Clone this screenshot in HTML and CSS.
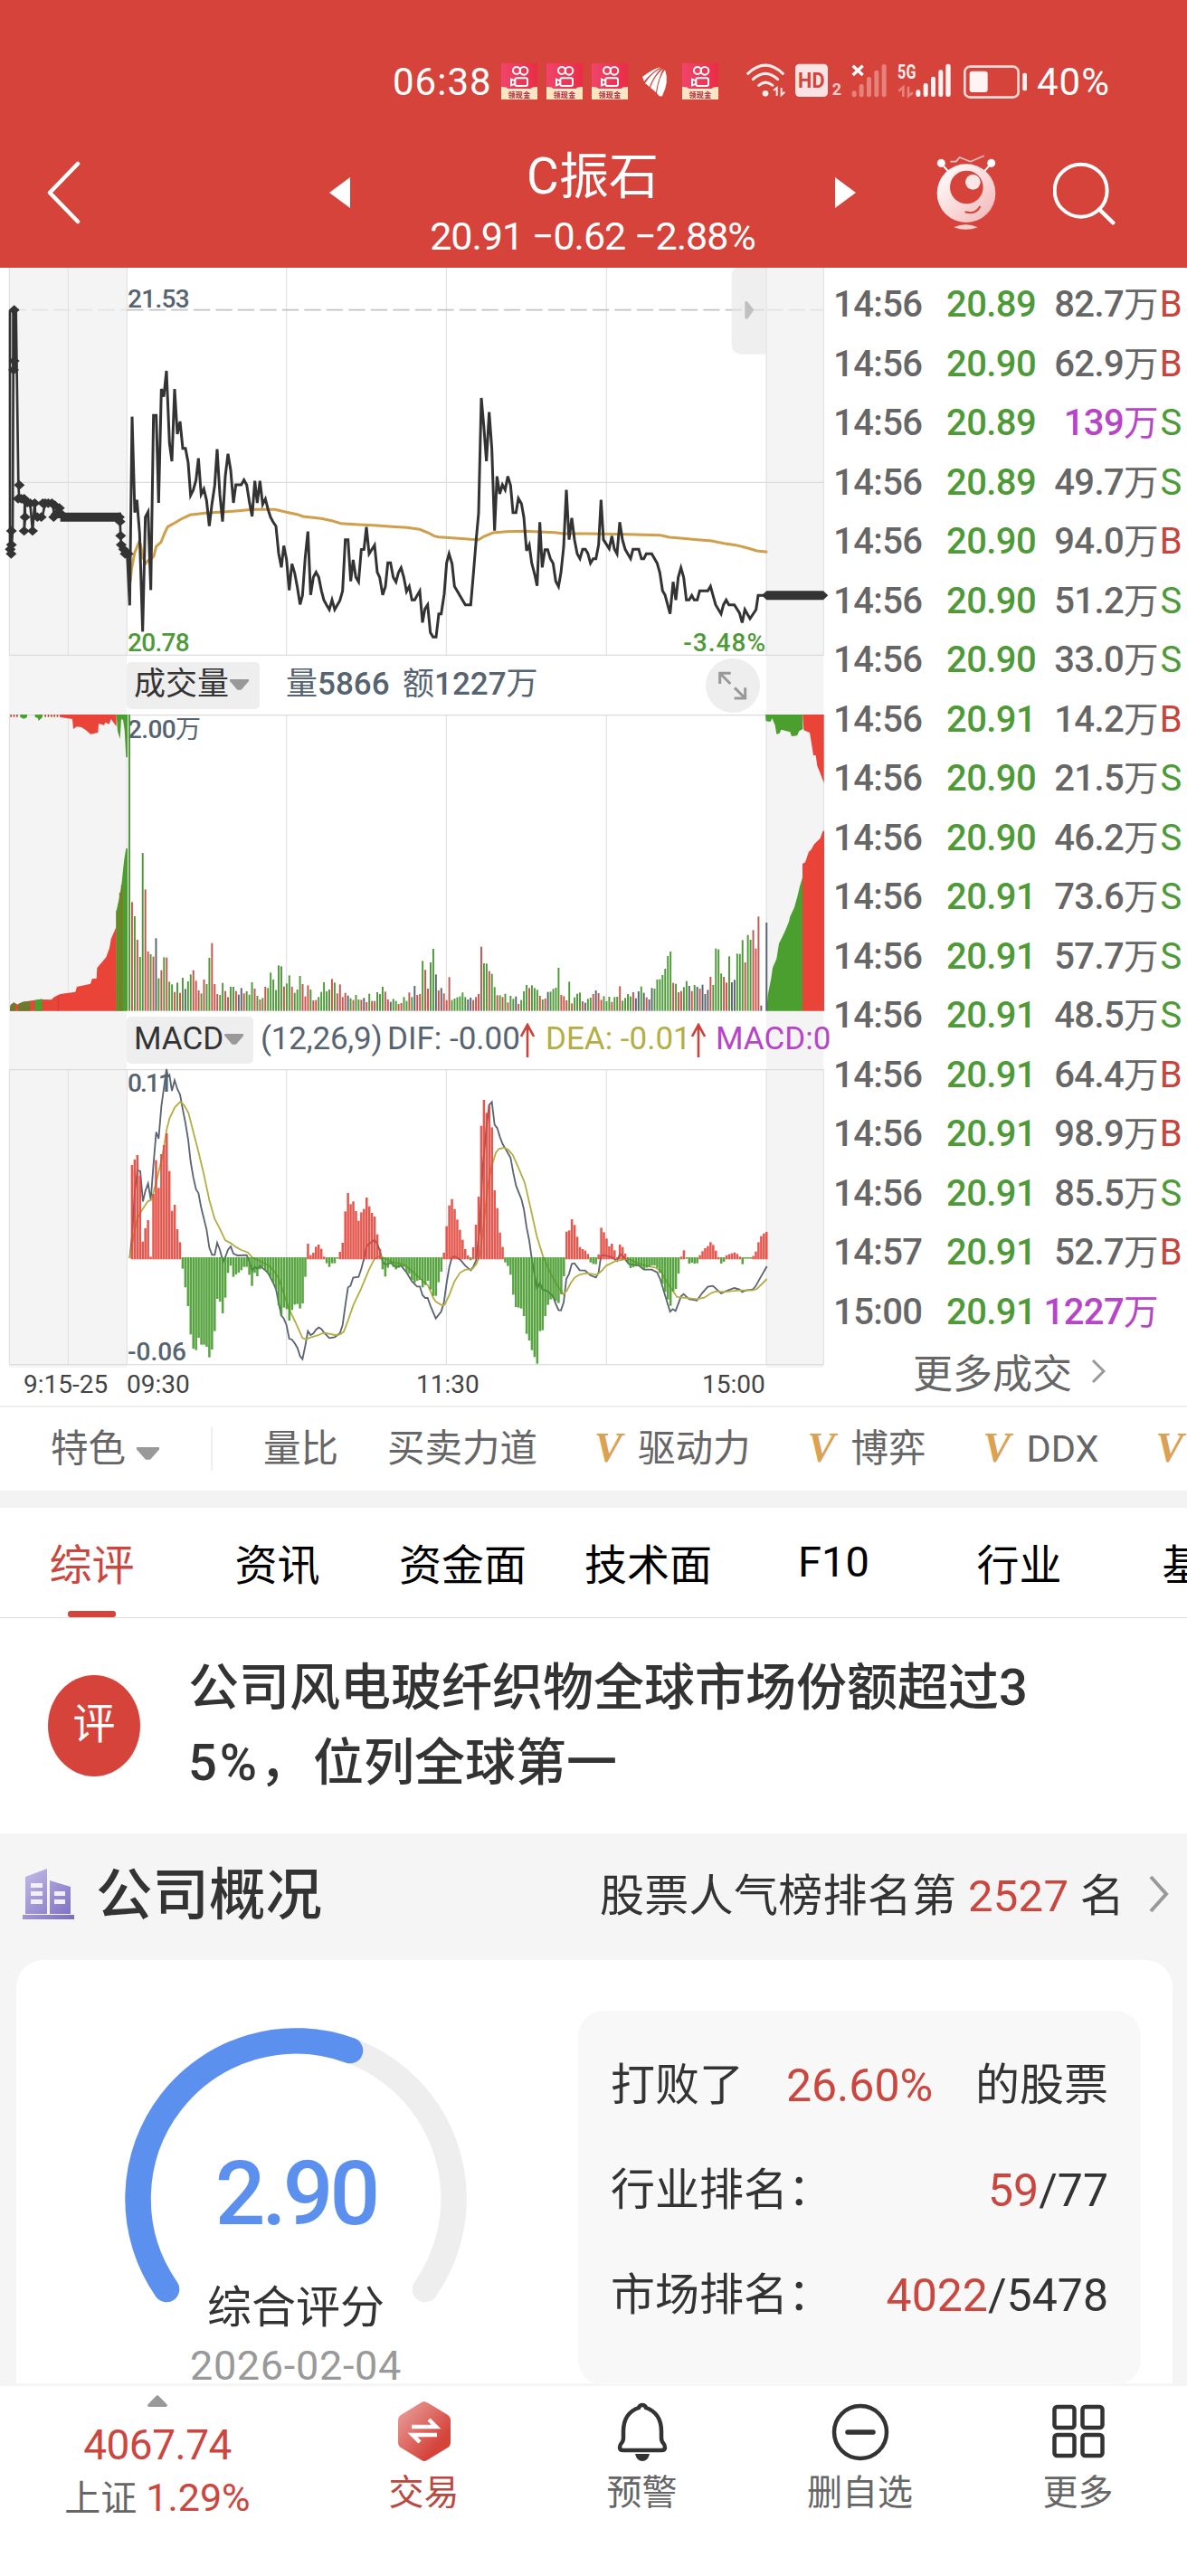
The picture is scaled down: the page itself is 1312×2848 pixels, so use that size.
FILE: index.html
```
<!DOCTYPE html>
<html lang="zh-CN">
<head>
  <meta charset="UTF-8">
  <title>C振石 行情</title>
  <meta name="viewport" content="width=device-width, initial-scale=1.0">
  <link rel="stylesheet" href="styles.css">
</head>
<body>
  <svg width="0" height="0" class="defs">
    <defs>
      <linearGradient id="ks-bg" x1="0" y1="0" x2="1" y2="0"><stop offset="0" stop-color="#f0456b"/><stop offset="1" stop-color="#e92c46"/></linearGradient>
      <linearGradient id="robot-bg" x1="0" y1="0" x2="1" y2="1"><stop offset="0.2" stop-color="#fff3f3"/><stop offset="1" stop-color="#f2b4b4"/></linearGradient>
      <linearGradient id="trade-bg" x1="0" y1="0" x2="1" y2="1"><stop offset="0" stop-color="#eba5a2"/><stop offset="0.75" stop-color="#d5433a"/></linearGradient>
      <linearGradient id="build-bg" x1="0" y1="0" x2="1" y2="1"><stop offset="0" stop-color="#c3bde6"/><stop offset="1" stop-color="#7a6cc3"/></linearGradient>
    </defs>
    <symbol id="ks" viewBox="0 0 120 120">
      <rect width="120" height="120" fill="url(#ks-bg)"/>
      <path d="M0 78 Q20 78 22 84 H98 Q100 78 120 78 V120 H0Z" fill="#fbe6c4"/>
      <g fill="none" stroke="#fff" stroke-width="6"><circle cx="51" cy="24" r="12"/><circle cx="75" cy="25" r="13"/><rect x="46" y="49" width="41" height="26" rx="6"/><path d="M46 58 L33 53 V73 L46 68"/></g>
      <text x="60" y="114" text-anchor="middle" font-size="24" font-weight="700" fill="#b3243c">领现金</text>
    </symbol>
  </svg>

  <header class="top">
    <div class="status-bar">
      <span class="clock">06:38</span>
      <div class="notice-icons">
        <svg width="40" height="40"><use href="#ks"/></svg>
        <svg width="40" height="40"><use href="#ks"/></svg>
        <svg width="40" height="40"><use href="#ks"/></svg>
        <svg width="40" height="40" viewBox="0 0 40 40" fill="#fff"><path d="M6 15 Q16 7 26 4 Q14 12 8 20 Z"/><path d="M9 22 Q15 12 27 5 Q17 16 14 26 Z"/><path d="M15 27 Q19 14 29 6 Q23 18 21 32 Z"/><path d="M22 33 Q24 16 31 7 Q36 20 28 36 Q25 38 22 33 Z"/></svg>
        <svg width="40" height="40"><use href="#ks"/></svg>
      </div>
      <svg class="signal-icons" width="312" height="40" viewBox="255 29 936 120">
        <g fill="none" stroke="#fdecec" stroke-width="9" stroke-linecap="round"><path d="M260 63 Q318 8 376 63"/><path d="M277 82 Q318 44 359 82"/><path d="M296 102 Q318 83 342 102"/></g>
        <circle cx="318" cy="129" r="10" fill="#fdecec"/>
        <path d="M345 119 L356 110 V137 M371 110 V134 L382 124" fill="none" stroke="#fdecec" stroke-width="6"/>
        <rect x="417" y="31" width="108" height="109" rx="14" fill="#fae3e3"/>
        <text x="471" y="110" text-anchor="middle" font-size="72" font-weight="700" fill="#d5433a" textLength="90" lengthAdjust="spacingAndGlyphs">HD</text>
        <text x="539" y="134" font-size="54" font-weight="700" fill="#f6cdcb">2</text>
        <path d="M608 37 L641 68 M641 37 L608 68" stroke="#fff" stroke-width="10"/>
        <g fill="#e5827c"><rect x="605" y="120" width="15" height="21" rx="7"/><rect x="629" y="98" width="15" height="43" rx="7"/><rect x="654" y="74" width="15" height="67" rx="7"/><rect x="679" y="52" width="15" height="89" rx="7"/><rect x="704" y="32" width="15" height="109" rx="7"/></g>
        <text x="756" y="80" font-size="66" font-weight="700" fill="#fdecec" textLength="62" lengthAdjust="spacingAndGlyphs">5G</text>
        <path d="M760 121 L775 108 V140 M792 106 V138 L807 126" fill="none" stroke="#e5827c" stroke-width="8"/>
        <g fill="#fff3f3"><rect x="817" y="117" width="15" height="23" rx="7"/><rect x="842" y="95" width="15" height="45" rx="7"/><rect x="867" y="73" width="15" height="67" rx="7"/><rect x="892" y="51" width="15" height="89" rx="7"/><rect x="916" y="31" width="16" height="109" rx="7"/></g>
        <rect x="979" y="40" width="178" height="102" rx="18" fill="none" stroke="#fad9d7" stroke-width="8"/>
        <rect x="995" y="55" width="60" height="70" rx="9" fill="#fff3f3"/>
        <rect x="1171" y="61" width="14" height="59" rx="5" fill="#fff3f3"/>
      </svg>
      <span class="battery">40%</span>
    </div>
    <div class="title-bar">
      <svg class="back" width="40" height="70" viewBox="0 0 40 70"><path d="M36 3 L5 35 L36 67" fill="none" stroke="#fff" stroke-width="4.5" stroke-linecap="round" stroke-linejoin="round"/></svg>
      <svg class="prev" width="24" height="34" viewBox="0 0 24 34"><path d="M23 0 V34 L0 17Z" fill="#fff"/></svg>
      <div class="stock">
        <h1>C振石</h1>
        <p>20.91 −0.62 −2.88%</p>
      </div>
      <svg class="next" width="24" height="34" viewBox="0 0 24 34"><path d="M1 0 V34 L24 17Z" fill="#fff"/></svg>
      <svg class="robot" width="66" height="84" viewBox="888 334 198 252">
        <g stroke="#fff" fill="#fff"><path d="M912 372 L926 388 M1062 372 L1048 388" stroke-width="6"/><circle cx="904" cy="362" r="13"/><circle cx="1070" cy="362" r="13"/></g>
        <path d="M934 357 H953 L965 343 L1001 357 L1046 338" fill="none" stroke="#f5c3c0" stroke-width="5"/>
        <circle cx="987" cy="462" r="97" fill="url(#robot-bg)"/>
        <circle cx="988" cy="442" r="55" fill="#d5433a"/>
        <circle cx="1009" cy="425" r="25" fill="#fbe6e6"/>
        <path d="M983 524 Q1020 534 1033 505" fill="none" stroke="#d5433a" stroke-width="6"/>
        <path d="M946 575 Q985 556 1025 575 Q985 590 946 575Z" fill="#f7cfcd"/>
      </svg>
      <svg class="search" width="70" height="70" viewBox="1274 354 210 210"><circle cx="1366" cy="449" r="87" fill="none" stroke="#fff" stroke-width="12"/><path d="M1427 511 L1473 556" stroke="#fff" stroke-width="13" stroke-linecap="round"/></svg>
    </div>
  </header>

  <section class="quote">
    <div class="charts">
      <svg id="price" class="chart" width="918" height="430" viewBox="0 18 2754 1290"></svg>

      <div class="indicator-bar">
        <button class="picker volume-picker">成交量<i class="caret"></i></button>
        <span class="vol-text">量<b>5866</b></span>
        <span class="amount-text">额<b>1227</b>万</span>
        <span class="expand">
          <svg width="60" height="60" viewBox="0 0 180 180" fill="none" stroke="#999" stroke-width="9"><path d="M47 84 V49 H83 M49 51 L82 84 M131 97 V132 H95 M129 130 L96 97"/></svg>
        </span>
      </div>

      <svg id="volume" class="chart" width="918" height="328" viewBox="0 210 2754 984"></svg>

      <div class="indicator-bar">
        <button class="picker macd-picker">MACD<i class="caret"></i></button>
        <span class="macd-params">(12,26,9)</span>
        <span class="dif">DIF: -0.00</span>
        <svg class="up" width="16" height="38" viewBox="0 0 16 38"><path d="M8 38 V2 M1 15 L8 2 L15 15" fill="none" stroke="#c9433a" stroke-width="2.6"/></svg>
        <span class="dea">DEA: -0.01</span>
        <svg class="up" width="16" height="38" viewBox="0 0 16 38"><path d="M8 38 V2 M1 15 L8 2 L15 15" fill="none" stroke="#c9433a" stroke-width="2.6"/></svg>
        <span class="macd">MACD:0</span>
      </div>

      <svg id="macd" class="chart" width="918" height="326" viewBox="0 66 2754 978"></svg>

      <div class="time-axis">
        <span>9:15-25</span><span>09:30</span><span>11:30</span><span>15:00</span>
      </div>
    </div>

    <div class="trades">
      <div id="trade-list"></div>
      <a class="more">更多成交<svg width="16" height="28" viewBox="0 0 16 28"><path d="M2 2 L14 14 L2 26" fill="none" stroke="#999" stroke-width="3"/></svg></a>
    </div>
  </section>

  <nav class="features">
    <span class="special">特色<i class="caret"></i></span>
    <span>量比</span>
    <span>买卖力道</span>
    <span class="vip"><b>V</b>驱动力</span>
    <span class="vip"><b>V</b>博弈</span>
    <span class="vip"><b>V</b>DDX</span>
    <span class="vip"><b>V</b></span>
  </nav>

  <nav class="tabs">
    <span class="active">综评</span><span>资讯</span><span>资金面</span><span>技术面</span><span>F10</span><span>行业</span><span>基金</span>
  </nav>

  <section class="comment">
    <div class="badge">评</div>
    <p>公司风电玻纤织物全球市场份额超过3<br><span class="percent">5%，</span>位列全球第一</p>
  </section>

  <section class="profile">
    <div class="profile-head">
      <svg width="57" height="56" viewBox="0 0 57 56"><path d="M3 50 V9 L27 0 V50Z M30 50 V13 L53 20 V50Z M0 51 H57 V56 H0Z" fill="url(#build-bg)"/><g fill="#f1effa"><rect x="9" y="16" width="13" height="5"/><rect x="9" y="25" width="13" height="5"/><rect x="9" y="34" width="13" height="5"/><rect x="35" y="25" width="12" height="5"/><rect x="35" y="34" width="12" height="5"/></g></svg>
      <h2>公司概况</h2>
      <p class="rank">股票人气榜排名第 <em>2527</em> 名</p>
      <svg class="arrow" width="24" height="42" viewBox="0 0 24 42"><path d="M3 2 L20 21 L3 40" fill="none" stroke="#999" stroke-width="4"/></svg>
    </div>
    <div class="card">
      <div class="score">
        <svg width="378" height="318" viewBox="0 0 378 318" fill="none" stroke-width="28.5" stroke-linecap="round">
          <path d="M46 289 A174.6 174.6 0 1 1 332 289" stroke="#eee"/>
          <path d="M46 289 A174.6 174.6 0 0 1 249 25" stroke="#5b90ee"/>
        </svg>
        <div class="score-num">2.90</div>
        <div class="score-name">综合评分</div>
        <div class="score-date">2026-02-04</div>
      </div>
      <div class="ranks">
        <div><span>打败了</span><em>26.60%</em><span>的股票</span></div>
        <div><span>行业排名：</span><span class="num"><em>59</em>/77</span></div>
        <div><span>市场排名：</span><span class="num"><em>4022</em>/5478</span></div>
      </div>
    </div>
  </section>

  <footer class="bottom-bar">
    <div class="index-quote">
      <svg width="22" height="13" viewBox="0 0 22 13"><path d="M11 0 Q13 1 22 11 Q22 13 20 13 H2 Q0 13 0 11 Q9 1 11 0Z" fill="#999"/></svg>
      <strong>4067.74</strong>
      <p>上证 <em>1.29%</em></p>
    </div>
    <div class="action trade">
      <svg width="58" height="66" viewBox="0 0 58 66"><path d="M29 0 Q31 0 55 15 Q58 17 58 21 V45 Q58 49 55 51 L32 65 Q29 67 26 65 L3 51 Q0 49 0 45 V21 Q0 17 3 15 L26 1 Q28 0 29 0Z" fill="url(#trade-bg)"/><path d="M15 28 H42 L34 20 M43 37 H16 L24 45" fill="none" stroke="#fff" stroke-width="4.5"/></svg>
      <span>交易</span>
    </div>
    <div class="action">
      <svg width="58" height="66" viewBox="0 0 58 66"><path d="M29 4 Q32 4 33 7 Q50 13 50 33 V40 Q50 44 52 46 Q54 48 54 51 Q54 54 50 54 H8 Q4 54 4 51 Q4 48 6 46 Q8 44 8 40 V33 Q8 13 25 7 Q26 4 29 4Z" fill="none" stroke="#333" stroke-width="4.5"/><path d="M21 58 H37 Q35 66 29 66 Q23 66 21 58Z" fill="#333"/></svg>
      <span>预警</span>
    </div>
    <div class="action">
      <svg width="64" height="66" viewBox="0 0 64 66"><circle cx="32" cy="34" r="29" fill="none" stroke="#333" stroke-width="4.5"/><path d="M18 34 H46" stroke="#333" stroke-width="5.5" stroke-linecap="round"/></svg>
      <span>删自选</span>
    </div>
    <div class="action">
      <svg width="58" height="66" viewBox="0 0 58 66" fill="none" stroke="#333" stroke-width="4.5"><rect x="2.5" y="6" width="22" height="23" rx="3"/><rect x="33.5" y="6" width="22" height="23" rx="3"/><rect x="2.5" y="37" width="22" height="23" rx="3"/><rect x="33.5" y="37" width="22" height="23" rx="3"/></svg>
      <span>更多</span>
    </div>
  </footer>

  <script src="script.js"></script>
</body>
</html>
```

FILE: styles.css
```
* {
  margin: 0;
  padding: 0;
  box-sizing: border-box;
}

body {
  width: 1312px;
  height: 2848px;
  overflow: hidden;
  background: #fff;
  color: #333;
  font-family: Roboto, "Noto Sans CJK SC", sans-serif;
}

svg {
  display: block;
  flex: none;
}

svg text {
  font-family: Roboto, "Noto Sans CJK SC", sans-serif;
}

em {
  font-style: normal;
  color: #ca463e;
}

.defs {
  position: absolute;
}

/* 顶部 */
.top {
  height: 296px;
  background: #d5433a;
  color: #fff;
}

.status-bar {
  display: flex;
  align-items: center;
  height: 180px;
  padding-left: 434px;
  font-size: 42px;
  letter-spacing: 1px;
}

.clock {
  width: 120px;
}

.notice-icons {
  display: flex;
  gap: 10px;
}

.signal-icons {
  margin-left: 31px;
}

.battery {
  margin-left: 9px;
}

.title-bar {
  display: flex;
  align-items: center;
  height: 116px;
  padding: 0 78px 0 50px;
}

.back {
  margin-top: -50px;
}

.prev {
  margin: -50px 0 0 274px;
}

.stock {
  width: 536px;
  margin-top: -20px;
  text-align: center;
}

.stock h1 {
  font-size: 55px;
  font-weight: 400;
  line-height: 66px;
}

.stock p {
  font-size: 43px;
  line-height: 66px;
  letter-spacing: -1px;
  white-space: nowrap;
}

.next {
  margin-top: -50px;
}

.robot {
  margin: -50px 0 0 89px;
}

.search {
  margin: -48px 0 0 63px;
}

/* 分时图 */
.quote {
  display: flex;
  height: 1260px;
  border-bottom: 2px solid #eee;
}

.charts {
  width: 919px;
  overflow: hidden;
  background: linear-gradient(to right, transparent 10px, #f4f4f4 10px, #f4f4f4 140px, transparent 140px, transparent 847px, #f4f4f4 847px, #f4f4f4 910px, transparent 910px) no-repeat 0 0 / 100% 1216px;
}

.chart {
  overflow: visible;
}

.indicator-bar {
  display: flex;
  align-items: center;
  height: 64px;
  padding-left: 140px;
  font-size: 35px;
  line-height: 60px;
  color: #566370;
  white-space: nowrap;
}

.indicator-bar span {
  padding-bottom: 3px;
}

.indicator-bar b {
  font-weight: 500;
}

.picker {
  display: flex;
  align-items: center;
  height: 52px;
  padding: 0 0 2px 8px;
  border: none;
  border-radius: 5px;
  background: #eee;
  color: #333;
  font: 35px/50px Roboto, "Noto Sans CJK SC", sans-serif;
}

.volume-picker {
  width: 147px;
}

.macd-picker {
  width: 140px;
}

.caret {
  width: 21px;
  height: 13px;
  margin-left: 1px;
  background: #999;
  clip-path: polygon(0 0, 100% 0, 100% 20%, 60% 95%, 40% 95%, 0 20%);
}

.vol-text {
  width: 129px;
  margin-left: 29px;
}

.amount-text {
  width: 190px;
}

.indicator-bar .expand {
  margin-left: 145px;
  padding: 0;
  border-radius: 50%;
  background: #eee;
}

.macd-params {
  width: 140px;
  margin-left: 8px;
  letter-spacing: -0.2px;
}

.dif {
  width: 147px;
}

.dea {
  width: 161px;
  margin-left: 12px;
  color: #b3af45;
}

.macd {
  width: 126px;
  margin-left: 11px;
  overflow: hidden;
  color: #b844ca;
}

.time-axis {
  display: flex;
  padding-top: 4px;
  font-size: 28px;
  line-height: 38px;
  color: #444;
}

.time-axis span:nth-child(1) {
  width: 140px;
  padding-left: 26px;
}

.time-axis span:nth-child(2) {
  width: 320px;
}

.time-axis span:nth-child(3) {
  width: 316px;
}

/* 成交明细 */
.trades {
  width: 393px;
  padding-top: 7px;
}

.trade-row {
  display: flex;
  height: 65.5px;
  font-size: 40px;
  font-weight: 500;
  line-height: 67px;
  letter-spacing: -0.6px;
  color: #666;
  white-space: nowrap;
}

.trade-row .time {
  width: 127px;
  padding-left: 2px;
}

.trade-row .price {
  width: 97px;
  color: #4e9a38;
}

.trade-row .amount {
  width: 137px;
  text-align: right;
}

.trade-row .amount i {
  font-style: normal;
  font-weight: 400;
  font-size: 38.5px;
}

.trade-row .big {
  color: #b844ca;
}

.trade-row .side {
  width: 28px;
  font-weight: 400;
  text-align: center;
}

.trade-row .buy {
  color: #c9433a;
}

.trade-row .sell {
  color: #4e9a38;
}

.more {
  display: flex;
  align-items: center;
  justify-content: flex-end;
  gap: 21px;
  height: 66px;
  padding: 2px 90px 0 0;
  font-size: 44px;
  color: #666;
}

/* 特色指标 */
.features {
  display: flex;
  align-items: center;
  height: 111px;
  padding-left: 56px;
  border-bottom: 19px solid #f3f3f3;
  font-size: 41.5px;
  line-height: 60px;
  color: #666;
  white-space: nowrap;
  overflow: hidden;
}

.features > span {
  flex: none;
  margin-right: 54px;
}

.features .special {
  display: flex;
  align-items: center;
  height: 48px;
  width: 179px;
  margin-right: 56px;
  border-right: 2px solid #eee;
}

.special .caret {
  width: 25px;
  height: 15px;
  margin: 10px 0 0 12px;
}

.vip b {
  display: inline-block;
  width: 48px;
  font: italic bold 46px/50px "Liberation Serif", serif;
  color: #dba253;
}

.features .vip {
  margin-left: 9px;
}

/* 标签页 */
.tabs {
  display: flex;
  height: 122px;
  overflow: hidden;
  border-bottom: 1px solid #ddd;
}

.tabs span {
  flex: none;
  display: flex;
  flex-direction: column;
  justify-content: center;
  align-items: center;
  width: 205px;
  padding: 0 2px 2px 0;
  font-size: 47px;
  color: #000;
}

.tabs .active {
  position: relative;
  color: #ca463e;
}

.tabs .active::after {
  content: "";
  position: absolute;
  bottom: 0;
  width: 53px;
  height: 7px;
  border-radius: 3px;
  background: #d5433a;
}

/* 点评 */
.comment {
  display: flex;
  align-items: center;
  height: 238px;
  padding-left: 53px;
}

.badge {
  width: 102px;
  height: 112px;
  border-radius: 50%;
  background: #d5433a;
  color: #fff;
  font-size: 47px;
  line-height: 108px;
  text-align: center;
}

.comment p {
  margin-left: 53px;
  font-size: 56px;
  font-weight: 500;
  line-height: 83px;
  white-space: nowrap;
}

.percent {
  letter-spacing: 3px;
}

/* 公司概况 */
.profile {
  height: 611px;
  overflow: hidden;
  background: #f5f5f5;
}

.profile-head {
  display: flex;
  align-items: center;
  height: 140px;
  padding: 0 19px 7px 25px;
}

.profile-head h2 {
  flex: 1;
  margin-left: 24px;
  padding-bottom: 8px;
  font-size: 62.5px;
  font-weight: 500;
}

.rank {
  padding-bottom: 4px;
  font-size: 49px;
  letter-spacing: 0.3px;
  white-space: nowrap;
}

.arrow {
  margin-left: 26px;
}

.card {
  display: flex;
  height: 468px;
  margin: 0 16px 0 18px;
  border-radius: 30px 30px 0 0;
  background: #fff;
}

.score {
  width: 378px;
  height: 393px;
  margin: 75px 0 0 120px;
  text-align: center;
}

.score-num {
  margin-top: -192px;
  font-size: 98px;
  font-weight: 500;
  line-height: 116px;
  letter-spacing: -4px;
  color: #5b90ee;
}

.score-name {
  margin-top: 34px;
  font-size: 49px;
  line-height: 68px;
}

.score-date {
  font-size: 45px;
  line-height: 60px;
  letter-spacing: 0.7px;
  color: #999;
}

.ranks {
  width: 622px;
  height: 414px;
  margin: 56px 0 0 123px;
  padding: 25px 36px 0;
  border-radius: 28px;
  background: #f8f8f8;
  font-size: 49px;
}

.ranks div {
  display: flex;
  justify-content: space-between;
  height: 116px;
  line-height: 116px;
  white-space: nowrap;
}

.ranks em,
.ranks .num {
  font-size: 50px;
}

/* 底部栏 */
.bottom-bar {
  display: flex;
  height: 210px;
  background: #fff;
  text-align: center;
}

.index-quote {
  display: flex;
  flex-direction: column;
  align-items: center;
  width: 348px;
  padding-top: 10px;
}

.index-quote strong {
  margin-top: 14px;
  font-size: 46px;
  font-weight: 400;
  line-height: 56px;
  letter-spacing: -0.5px;
  color: #ca463e;
}

.index-quote p {
  font-size: 40px;
  line-height: 60px;
  color: #666;
}

.index-quote em {
  font-size: 43px;
}

.action {
  display: flex;
  flex-direction: column;
  align-items: center;
  width: 241px;
  padding-top: 17px;
  font-size: 39px;
  line-height: 58px;
  color: #666;
}

.action span {
  margin-top: 6px;
}

.trade span {
  color: #bb4740;
}
```

FILE: script.js
```
// 图表坐标单位为 1/3 像素
const X0 = 429;
const STEP = 8.84;

function grid(top, bottom, rows) {
  let s = '';
  [31, 226, 421, 950, 1480, 2011, 2541, 2731].forEach(x => {
    s += `<path d="M${x} ${top}V${bottom}" stroke="#e1e1e1" stroke-width="3.5"/>`;
  });
  rows.forEach(y => {
    s += `<path d="M31 ${y}H2732" stroke="#dcdcdc" stroke-width="3.5"/>`;
  });
  return s;
}

function line(points, color, width) {
  return `<polyline points="${points}" fill="none" stroke="${color}" stroke-width="${width}"/>`;
}

function area(points, color) {
  return `<polygon points="${points}" fill="${color}"/>`;
}

function label(x, y, text, color, width) {
  return `<text x="${x}" y="${y}" font-size="84" font-weight="500" fill="${color}" textLength="${width}">${text}</text>`;
}

/* ---------- 分时价格 ---------- */
const auction = '33,160 33,950 37,965 42,891 45,158 47,158 47,357 53,158 61,739 64,784 82,790 84,845 80,891 82,800 100,799 108,891 115,799 118,845 140,845 150,799 175,799 180,845 400,845 398,860 400,907 402,937 410,952 415,967 425,967';
const marks = '47,158 47,327 45,357 64,739 60,784 70,784 80,784 90,797 100,799 115,799 83,845 80,891 108,891 124,845 137,845 142,799 150,799 160,799 172,799 182,806 197,815 178,845 186,835 200,832 38,891 38,937 34,952 37,967 396,845 398,860 400,907 402,937 410,952 415,967 425,967';
const price = '422,967 430,1138 438,512 447,830 454,788 463,900 473,1225 482,845 491,828 500,1087 509,508 518,508 526,798 535,420 543,446 552,360 562,600 570,660 579,420 588,570 597,528 606,617 615,617 624,665 632,773 641,755 650,722 658,650 667,770 676,752 685,790 694,875 703,800 712,740 720,620 729,770 738,860 747,710 756,635 765,690 774,798 782,738 800,738 809,722 818,738 827,795 836,843 845,725 853,798 862,725 871,803 880,785 889,820 897,845 906,862 915,875 924,965 933,1012 941,940 950,985 959,1088 968,1000 977,1030 986,1078 995,1135 1003,1105 1012,980 1021,893 1030,1103 1039,1045 1048,1028 1057,1045 1066,1090 1074,1120 1083,1137 1092,1152 1101,1120 1110,1152 1127,1122 1136,1090 1145,920 1154,920 1163,1058 1171,987 1180,1045 1189,1060 1198,953 1207,952 1215,878 1224,967 1242,938 1251,1028 1259,1045 1269,1103 1278,1075 1286,997 1295,997 1304,1045 1313,1060 1321,1030 1330,1013 1339,1045 1348,1092 1357,1075 1366,1120 1375,1120 1392,1090 1401,1195 1409,1150 1418,1136 1427,1228 1436,1243 1446,1243 1455,1166 1463,1166 1473,1100 1481,997 1489,967 1499,1000 1507,1075 1543,1136 1561,1136 1570,1030 1579,920 1587,832 1596,450 1604,540 1613,660 1622,497 1631,620 1640,890 1648,710 1657,768 1666,738 1675,755 1684,710 1693,740 1701,830 1711,830 1719,783 1729,800 1737,845 1746,957 1755,937 1763,997 1773,1035 1781,1073 1790,862 1798,1012 1807,953 1816,953 1825,983 1834,998 1843,1058 1852,1075 1860,1030 1869,945 1878,755 1887,920 1896,848 1905,920 1914,967 1923,983 1932,952 1941,952 1949,965 1958,998 1967,983 1976,983 1985,937 1993,788 2001,920 2020,950 2029,908 2037,950 2046,967 2055,862 2064,920 2073,952 2091,983 2099,952 2118,952 2127,983 2135,983 2143,967 2161,967 2179,998 2188,1030 2197,1090 2205,1103 2222,1166 2232,1060 2241,1120 2249,1045 2258,1013 2267,1045 2276,1120 2285,1120 2294,1105 2302,1120 2312,1120 2320,1090 2347,1090 2356,1075 2373,1136 2391,1166 2399,1136 2408,1120 2417,1136 2435,1136 2452,1163 2461,1195 2470,1152 2487,1182 2507,1152 2514,1105 2540,1105';
const average = '432,1060 436,1020 446,965 460,930 466,935 474,980 484,998 492,988 500,985 510,975 518,942 534,928 545,900 556,877 580,864 600,852 630,838 680,832 740,828 790,824 840,820 912,820 950,829 985,836 1005,843 1065,850 1100,857 1130,866 1190,870 1250,873 1300,877 1350,880 1392,886 1420,897 1440,908 1455,911 1500,914 1560,919 1587,920 1605,909 1635,897 1680,893 1740,892 1840,896 1870,900 1950,900 2080,902 2190,905 2220,912 2360,924 2400,932 2440,938 2480,948 2510,957 2545,961';

let s = grid(18, 1303, [730, 1303]);
s += '<path d="M31 158H421M2541 158H2731" stroke="#e4e4e4" stroke-width="5" stroke-dasharray="55 18.5"/>';
s += '<path d="M421 158H2540" stroke="#c4c4c4" stroke-width="5" stroke-dasharray="55 18.5"/>';
s += '<path d="M2540 18H2450Q2426 18 2426 42V270Q2426 305 2462 305H2540Z" fill="#e6e6e6" fill-opacity=".65"/>';
s += '<path d="M2470 132Q2472 126 2480 132L2500 158L2480 186Q2472 190 2470 184Z" fill="#c0c0c0"/>';
s += label(423, 149, '21.53', '#566370', 206);
s += label(423, 1291, '20.78', '#4e9a38', 206);
s += line(average, '#cf9f4c', 9);
s += line(auction, '#333', 8);
s += line('47,158 47,357', '#333', 14);
s += '<path d="M200 845H402" stroke="#333" stroke-width="30"/>';
marks.split(' ').forEach(p => {
  const [x, y] = p.split(',').map(Number);
  s += `<path d="M${x - 18} ${y}L${x} ${y - 16}L${x + 18} ${y}L${x} ${y + 16}Z" fill="#333"/>`;
});
s += line(price, '#333', 9);
s += '<path d="M2526 1105L2542 1090H2730L2746 1105L2730 1120H2542Z" fill="#333"/>';
s += label(2266, 1291, '-3.48%', '#4e9a38', 272);
document.getElementById('price').innerHTML = s;

/* ---------- 成交量，每分钟一根柱 ---------- */
const volume = `g210 r832 g879 r957 g1014 g669 r790 r996 g1005 r1013 k952 g1085 r1058 g1015 r1016 g1096 g1105 r1130 g1099 r1133
g1083 k1120 g1095 g1072 r1058 r1093 r1125 g1135 r1089 g1104 g1017 r968 r1104 r1137 g1140 g1100 r1127 r1147 g1113 g1113
r1127 k1139 k1117 r1135 g1128 g1139 g1098 r1119 g1143 r1155 g1150 r1113 g1117 g1066 g1089 g1124 g1042 g1045 r1112 g1102
g1075 r1113 g1133 g1122 g1077 r1104 r1145 r1108 g1122 r1158 r1157 g1147 g1130 g1098 g1128 g1122 r1087 g1099 r1135 r1105
r1147 r1133 k1142 g1151 r1157 g1140 g1155 r1156 k1150 r1164 g1136 r1160 r1160 g1131 g1137 g1113 r1129 r1155 k1163 g1153
g1160 r1170 r1167 g1147 g1160 r1132 g1147 k1110 r1140 r1137 g1027 r1057 r1119 g1032 g987 k1072 r1125 k1117 r1135 r1157
r1081 g1157 g1152 g1148 g1145 g1132 g1147 k1155 k1149 r1157 r1147 r1137 r980 g1035 g1036 r1061 g1070 g1114 r1141 g1141
r1147 g1136 r1165 g1143 g1153 k1145 r1170 g1157 g1128 g1107 r1117 g1108 g1117 g1123 r1143 g1155 r1152 k1130 g1129 g1120
g1116 g1050 r1140 r1144 r1158 g1096 r1168 g1148 g1136 g1132 r1161 k1166 g1153 g1149 r1137 k1125 r1134 r1156 g1144 g1161
g1146 r1163 g1147 g1146 r1111 g1159 g1150 g1137 g1145 r1131 k1151 k1128 g1112 k1133 r1148 k1155 k1117 g1119 g1089 g1088
g1074 g1053 g1011 g996 r1100 g1103 r1131 r1127 g1114 g1094 k1110 r1127 g1107 k1113 r1119 k1106 k1137 k1123 r1080 g1107
g986 g989 g1069 r1080 r1099 g1012 k1098 k1090 g1003 g1004 g958 r1032 g941 g957 r925 r986 r880 k1175 k1193 k900`.split(/\s+/);

s = grid(210, 1193, [212]);
s += area('33,1193 33,1178 45,1165 60,1172 75,1163 110,1158 135,1155 170,1156 180,1147 200,1137 250,1130 255,1113 300,1103 305,1087 320,1085 322,1050 335,1035 352,1015 363,985 368,955 385,915 386,1193', '#ea4338');
s += area('33,1193 35,1172 47,1165 52,1172 52,1193', '#6c7a2c');
s += area('60,1193 60,1170 75,1163 100,1160 100,1193', '#6c7a2c');
s += area('115,1193 115,1157 140,1153 140,1193', '#4a9f2e');
s += area('385,1193 385,865 395,820 403,775 408,725 412,690 418,654 423,654 423,1193', '#4a9f2e');
s += '<path d="M388 1193V860M398 1193V800M404 1193V775" stroke="#7c7a26" stroke-width="5"/><path d="M193 1193V1142" stroke="#c04040" stroke-width="3"/>';
s += area('198,210 198,218 240,225 243,258 255,250 270,252 285,262 300,275 325,270 327,240 345,245 350,236 362,242 368,225 386,250 386,210', '#ea4338');
s += '<path d="M34 214H62M148 214H195" stroke="#c04a38" stroke-width="8" stroke-dasharray="5 5"/>';
s += area('66,210 68,220 80,224 90,218 90,210', '#4a9f2e') + area('115,210 117,219 126,222 128,231 140,220 142,210', '#4a9f2e');
s += area('386,210 390,265 398,292 402,225 408,228 413,260 418,352 423,352 423,210', '#4a9f2e');
s += area('2538,210 2540,232 2555,234 2560,222 2570,245 2575,275 2585,272 2590,260 2620,268 2625,282 2643,280 2650,265 2662,258 2662,210', '#4a9f2e');
s += area('2662,210 2665,262 2685,270 2690,300 2697,345 2705,345 2710,380 2720,405 2732,437 2732,210', '#ea4338');
s += area('2542,1193 2546,1140 2557,1085 2562,1050 2575,1020 2583,970 2600,935 2615,900 2620,880 2634,850 2645,810 2652,780 2661,750 2661,1193', '#4a9f2e');
s += area('2661,1193 2661,705 2670,700 2682,665 2690,658 2700,640 2720,620 2728,598 2733,595 2733,1193', '#ea4338');
s += label(423, 287, '2.00<tspan font-weight="400">万</tspan>', '#566370', 243);
const colors = { r: '#c8544c', g: '#4e9a38', k: '#5b6572' };
volume.forEach((v, i) => {
  const y = +v.slice(1);
  s += `<rect x="${(X0 + i * STEP - 2.9).toFixed(1)}" y="${y}" width="5.8" height="${1193 - y}" fill="${colors[v[0]]}"/>`;
});
document.getElementById('volume').innerHTML = s;

/* ---------- MACD ---------- */
const dif = '430,693 438,620 447,470 456,402 465,404 474,505 482,470 491,445 500,500 509,380 518,275 526,297 535,190 552,66 557,90 562,85 570,138 579,103 588,132 597,150 606,200 615,245 624,300 632,372 641,425 650,465 658,477 667,525 685,598 694,658 703,682 712,682 720,642 729,665 740,705 747,690 756,665 765,654 774,678 788,684 818,683 827,705 836,735 845,722 853,728 862,718 889,742 906,775 915,795 924,840 933,884 941,893 950,915 959,960 968,963 977,975 986,990 995,1018 1003,1028 1012,985 1021,935 1030,948 1039,943 1048,930 1057,923 1066,928 1075,940 1092,958 1110,955 1127,942 1136,915 1145,850 1154,790 1162,785 1171,758 1189,755 1198,728 1207,695 1215,655 1224,645 1242,632 1251,645 1260,670 1269,705 1278,715 1295,708 1313,722 1330,718 1348,740 1366,770 1383,787 1392,787 1401,815 1410,825 1418,825 1427,850 1445,893 1463,870 1472,840 1481,775 1490,722 1498,692 1507,687 1525,697 1543,718 1561,733 1570,720 1579,700 1590,600 1600,400 1613,260 1622,185 1631,175 1640,250 1649,262 1658,292 1667,315 1680,337 1693,360 1702,410 1711,452 1720,475 1729,497 1737,530 1746,590 1755,635 1764,700 1773,750 1781,795 1790,775 1799,797 1816,803 1834,820 1843,845 1852,865 1860,866 1869,840 1878,762 1887,745 1896,712 1905,710 1922,733 1940,734 1958,750 1976,757 1985,740 1993,685 2002,683 2030,690 2046,703 2055,680 2064,685 2085,712 2118,717 2135,731 2161,731 2179,740 2190,765 2205,815 2222,870 2231,862 2240,868 2249,845 2258,820 2267,812 2285,829 2311,833 2329,808 2347,788 2364,785 2391,810 2408,802 2435,792 2452,797 2461,805 2473,800 2496,797 2505,787 2520,760 2543,720';
const dea = '430,693 447,600 456,560 470,535 490,505 502,500 518,440 535,370 544,320 553,265 562,230 580,192 598,174 610,185 625,212 640,270 658,340 676,415 694,500 712,563 729,595 747,634 765,643 782,656 800,666 822,674 836,690 860,702 890,717 906,732 924,760 941,810 959,863 977,900 1003,958 1015,962 1030,956 1048,951 1075,940 1110,948 1127,946 1140,937 1154,900 1171,850 1198,793 1224,730 1242,695 1260,686 1278,695 1304,706 1340,715 1366,735 1392,760 1419,783 1437,825 1445,837 1466,850 1474,848 1490,815 1507,770 1525,742 1543,731 1565,730 1580,712 1592,680 1604,580 1618,450 1631,385 1645,342 1655,330 1670,327 1684,332 1700,350 1720,395 1740,443 1760,530 1780,620 1800,685 1826,745 1852,790 1868,813 1880,800 1893,775 1906,757 1923,747 1945,743 1980,748 1995,735 2010,718 2040,703 2080,695 2130,715 2175,725 2190,735 2210,770 2230,800 2245,822 2265,824 2311,829 2335,824 2360,808 2375,803 2400,805 2450,800 2495,800 2510,795 2525,780 2543,762';
const bars = [384, 366, 351, 420, 638, 594, 567, 688, 480, 368, 460, 348, 318, 279, 404, 536, 516, 597, 640,
  728, 790, 852, 946, 993, 998, 957, 980, 980, 987, 1022, 996, 935, 828, 837, 876, 824, 742, 718, 755, 747, 741, 733, 722, 722, 748, 785, 742, 753, 730, 722, 735, 745, 760, 775, 795, 850, 882, 857, 862, 900, 865, 847, 845, 860, 843, 755,
  645, 683, 675, 655, 648, 662, 688, 710, 722, 710, 710, 695,
  672, 642, 538, 477, 514, 505, 537, 569, 541, 530, 492, 521, 543, 555, 614, 662,
  730, 754, 725, 712, 722, 730, 725, 720, 722, 740, 745, 765, 775, 768, 765, 790, 782, 768, 797, 818, 818, 773, 738,
  675, 587, 518, 497, 530, 565, 599, 632, 663, 684, 700, 657, 582, 489, 254, 168, 211, 185, 259, 468, 527, 608, 656,
  707, 719, 748, 814, 855, 857, 860, 885, 944, 966, 998, 1021, 1043, 935, 932, 885, 848, 830, 827, 835, 842, 813, 753,
  605, 601, 564, 583, 622, 656, 663, 668, 679, 707, 712, 713, 681, 592, 607, 628, 654, 645, 667, 690, 648, 656, 678,
  708, 726, 723, 720, 718, 722, 730, 725, 722, 717, 717, 725, 742, 778, 805, 830, 851, 803, 795, 744,
  688, 667, 695, 711, 708, 711, 710, 683, 670, 660, 653, 640, 649, 668, 690, 711, 705, 684, 680, 677, 674, 679, 688, 713, 695, 695, 695, 686, 671, 640, 620, 611, 606];

s = grid(67, 1046, [68, 1046]);
s += label(423, 142, '0.11', '#566370', 150);
s += label(423, 1033, '-0.06', '#566370', 195);
s += line(dif, '#5b6572', 5.5);
s += line(dea, '#b3af45', 5.5);
bars.forEach((y, i) => {
  const x = (X0 + (i + 1) * STEP - 3.8).toFixed(1);
  // 红柱在零轴上方，绿柱在下方
  if (y < 693) s += `<rect x="${x}" y="${y}" width="7.6" height="${697 - y}" fill="#e2463c" fill-opacity=".9"/>`;
  else s += `<rect x="${x}" y="690" width="7.6" height="${y - 690}" fill="#459a2c" fill-opacity=".9"/>`;
});
document.getElementById('macd').innerHTML = s;

/* ---------- 逐笔成交 ---------- */
const trades = [
  ['14:56', '20.89', '82.7', 'B'], ['14:56', '20.90', '62.9', 'B'], ['14:56', '20.89', '139', 'S'],
  ['14:56', '20.89', '49.7', 'S'], ['14:56', '20.90', '94.0', 'B'], ['14:56', '20.90', '51.2', 'S'],
  ['14:56', '20.90', '33.0', 'S'], ['14:56', '20.91', '14.2', 'B'], ['14:56', '20.90', '21.5', 'S'],
  ['14:56', '20.90', '46.2', 'S'], ['14:56', '20.91', '73.6', 'S'], ['14:56', '20.91', '57.7', 'S'],
  ['14:56', '20.91', '48.5', 'S'], ['14:56', '20.91', '64.4', 'B'], ['14:56', '20.91', '98.9', 'B'],
  ['14:56', '20.91', '85.5', 'S'], ['14:57', '20.91', '52.7', 'B'], ['15:00', '20.91', '1227', '']
];
document.getElementById('trade-list').innerHTML = trades.map(([time, price, amount, side]) => {
  const big = amount > 100 ? ' big' : '';
  return `<div class="trade-row"><span class="time">${time}</span><span class="price">${price}</span><span class="amount${big}">${amount}<i>万</i></span><span class="side ${side === 'B' ? 'buy' : 'sell'}">${side}</span></div>`;
}).join('');
```
